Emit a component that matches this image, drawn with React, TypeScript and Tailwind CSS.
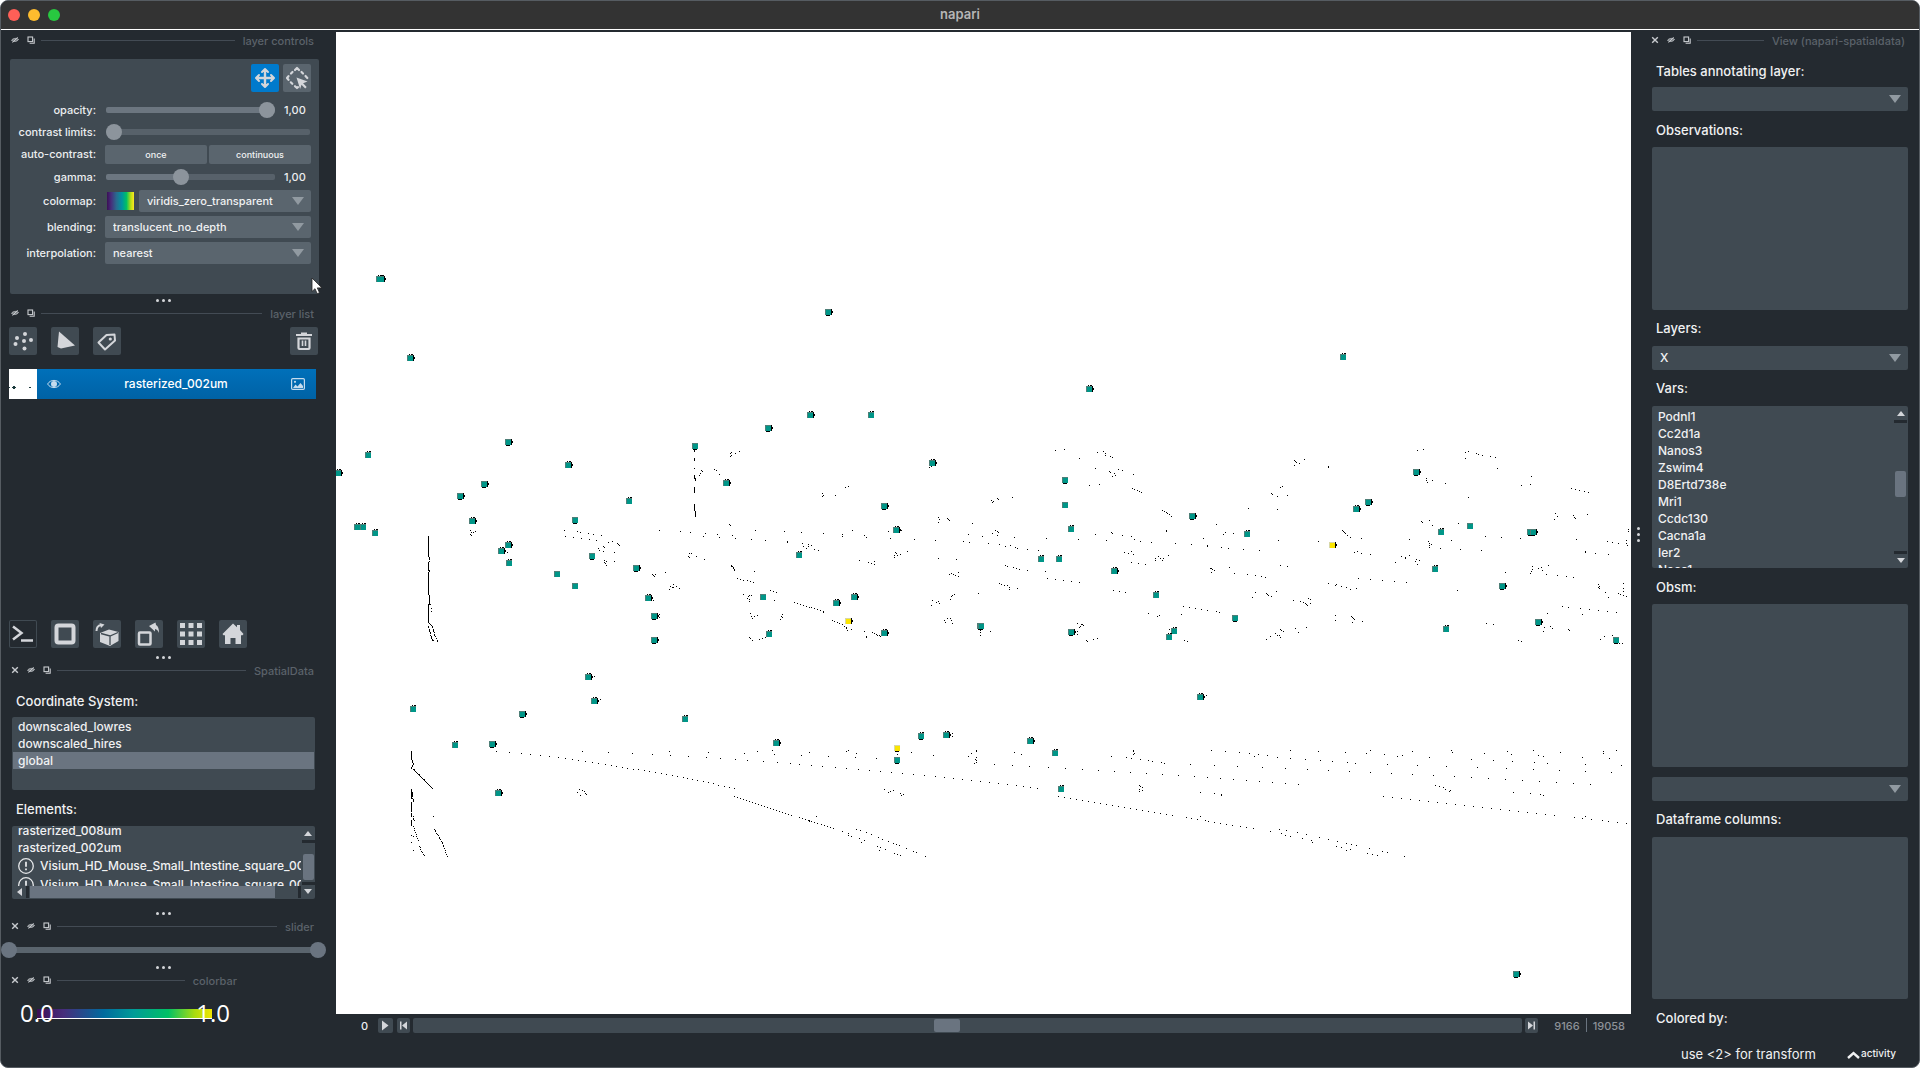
import React from "react";

/* ---------- scatter data ---------- */

// Raster tiles are stored on a finer grid than the canvas: 1568/660 units per pixel across, 3 down.
const UX = 1568 / 660;
const UY = 3;
const CANVAS_X = 336;
const CANVAS_Y = 32;

type Tile = { ox: number; oy: number; marks: string; dots: string; runs: string };

// marks: x,y,flags (r right edge, t top edge, b bottom edge, y yellow); dots: x,y; runs: x1,y1,x2,y2,count
const TILES: Tile[] = [
  {
    ox: 330,
    oy: 260,
    marks:
      "122,56,rt 117,56,t 1184,157,rb 191,294,rt 1141,464,rt 1285,464,t 1041,505,rb 423,547,rb 867,558,b 92,585,t 566,614,rt 1431,608,rt 20,638,rt 941,668,rt 366,673,rb 309,708,rb 710,722,t 1316,739,rb 338,782,rt 582,780,b 64,800,t 78,800,t 107,818,t 1345,811,rt 423,854,rt 408,873,rt 1114,884,t 624,888,b 425,909,t 727,924,rb 539,943, 582,979, 756,1014,rt 1029,1010, 1245,1010,rt 1203,1028,rt 771,1068,rb 1231,1082,ry 1316,1119,rt 1546,1098,b 1043,1122,t 771,1140,rb",
    dots:
      "953,576 951,580 953,585 951,590 963,580 973,574 878,646 881,640 885,634 883,630 913,628 918,631 925,643 1224,682 1232,679 1171,701 1173,705 1171,709 1201,706 1424,622 1428,618 1446,771 1447,779 1446,786 1467,775 1469,779 1471,781 1526,790 334,812 336,817 334,822 337,826 340,818 345,814 949,794 951,797 783,811 833,814 857,817 891,821 887,829 920,823 925,832 956,826 963,835 1001,838 1011,811 1034,841 1080,814 1086,845 1088,848 1120,817 1172,820 1217,823 1217,829 1242,811 1270,826 1274,832 1328,814 1332,835 1388,838 1438,841 1505,844 1519,847 1517,823 1550,829 1564,850 1357,812 1122,850 1125,860 1136,853 1137,860 1132,864 1145,856 1151,867 1160,871 557,811 588,814 594,817 614,820 626,823 645,826 560,829 578,832 597,835 617,838 632,841 661,847 670,844 684,850 686,853 688,856 650,859 652,862 638,865 640,870 650,874 677,877 651,908 653,902 655,910 658,916 656,905 676,904 616,891 421,877 853,880 852,888 855,893 858,881 871,888 889,898 1258,901 1279,908 1287,910 1293,905 1293,913 1343,878 1345,881 1340,886 1342,891 1348,885 1355,884 1372,874 1446,895 1488,898 766,942 768,945 770,950 774,942 797,937 1009,934 1472,942 1476,940 1482,944 1487,946 1492,938 1493,950 806,988 810,978 815,974 814,982 817,982 824,979 831,985 982,1003 994,1010 997,1006 992,1015 996,1018 997,1024 1001,1005 1046,991 1053,994 1061,997 1056,1021 1483,1003 1480,1007 1477,1010 1475,1018 1432,1021 1430,1035 1441,1027 1446,1024 1449,1030 1540,1000 999,1060 1001,1068 1003,1076 1008,1070 1015,1067 1074,1063 1072,1068 1074,1072 1070,1078 1467,1074 1460,1080 1462,1087 1474,1074 1477,1080 1479,1090 996,1132 1000,1136 1003,1142 1020,1139 1028,1135 1034,1131 1271,1114 1274,1132 1274,1130 769,1021 783,1064 783,1073 1226,1101 1228,1106 1229,1110 1238,1108 1546,1110 1546,1118 1546,1125 255,1144 1172,1056",
    runs:
      "234,828,234,874,28 234,877,236,903,9 234,906,234,930,12 236,930,234,944,5 234,945,234,1004,30 236,1006,236,1034,10 239,1034,241,1055,3 234,1032,234,1085,24 235,1088,243,1098,5 243,1100,250,1130,9 234,1100,243,1140,12 250,1130,255,1141,3 240,1132,246,1140,4 866,572,866,574,2 866,595,866,602,5 866,626,866,626,1 866,646,868,662,7 866,683,866,697,7 866,733,866,742,5 866,744,869,768,10 953,916,962,930,7 968,955,1006,968,6 1104,1027,1172,1055,11 1194,1081,1222,1098,6 1290,1118,1308,1130,6 400,879,408,879,4",
  },
  {
    ox: 980,
    oy: 330,
    marks:
      "862,80,t 259,176,rt 1036,426,rb 202,451,b 922,517,rb 202,524,l 893,536,rt 505,558,rb 1166,588, 216,596,t 1095,606,t 1308,606,rb 1314,606,rb 634,612,t 836,645,ry 145,686,t 188,686,t 1081,716,t 318,722,rt 1241,769,rb 420,794,t 606,865,b 1326,876,rb 4,888,b 1109,896,t 462,902,t 218,906,rb 449,920,t 1512,930,b",
    dots:
      "179,361 200,358 236,385 279,367 293,364 297,370 299,376 309,379 315,382 274,415 307,424 310,428 319,430 328,418 338,421 321,436 314,439 364,433 260,466 285,463 77,502 27,512 30,516 33,513 41,505 44,507 747,391 750,394 753,398 758,400 746,405 771,388 828,409 828,412 1039,361 1053,358 1153,367 1160,364 1153,385 1180,370 1184,373 1195,376 1213,379 1225,382 1229,415 1061,444 1061,450 1062,456 1075,451 1106,460 1160,502 1310,439 1308,463 1286,466 692,490 695,493 707,499 715,472 718,469 730,496 638,535 707,538 1367,550 1365,568 1371,559 1409,556 1412,562 1414,565 1443,553 562,583 1049,574 1051,577 1068,571 1075,586 1137,580 38,601 41,604 43,607 30,609 41,616 6,619 82,622 158,625 234,628 274,613 312,607 315,610 300,631 338,616 360,619 367,628 381,634 408,637 443,601 443,604 464,640 503,643 531,625 541,646 541,649 574,652 578,613 583,607 590,655 602,610 626,658 664,661 709,631 804,634 862,601 863,604 866,607 868,611 872,616 880,622 906,625 1020,628 1065,635 1067,640 1069,646 1067,651 1072,642 1094,655 1120,631 1142,658 1191,661 1201,619 1239,622 1284,625 1417,628 1541,599 1541,604 1491,634 1503,637 1516,640 1535,631 1535,640 1538,646 1439,664 1439,667 1462,670 1493,673 20,640 46,643 60,649 73,646 85,652 89,655 113,658 138,661 343,667 352,670 361,664 364,673 360,697 376,700 393,703 417,691 417,685 423,680 430,684 433,690 437,686 449,676 890,667 897,664 906,670 928,673 987,697 1001,679 1010,685 1012,681 1020,676 1034,694 1037,688 1039,703 1044,691 60,706 66,709 79,712 87,715 95,718 113,721 155,724 547,715 551,716 553,719 556,722 550,727 593,712 605,730 635,733 654,736 669,739 678,742 714,706 730,709 160,745 179,748 198,751 217,754 236,757 899,745 928,748 956,751 985,754 1013,757 1248,727 1308,730 1310,724 1313,709 1312,718 1328,715 1333,712 1336,721 1350,706 1346,733 1371,736 1393,739 1410,742 828,760 846,764 845,766 859,769 870,772 880,778 894,775 46,760 52,763 59,765 65,767 69,771 70,777 89,775 317,781 331,784 346,787 647,802 654,787 680,790 683,793 686,795 692,799 704,784 745,811 762,814 768,817 773,819 776,822 779,826 781,805 785,808 784,820 1134,781 1470,763 1471,769 1472,775 1469,772 1529,760 1528,775 1528,784 1486,787 1493,802 1517,790 1521,794 1529,796 1536,799 483,829 497,832 512,835 526,838 541,841 562,844 569,847 479,853 401,850 422,859 426,856 844,856 844,871 883,859 885,862 887,865 889,868 885,877 909,874 1384,829 1398,832 1426,835 1448,838 1469,841 1490,844 1512,847 1431,853 1348,850 1203,880 1220,883 232,880 236,892 240,884 243,882 245,886 238,890 231,905 231,913 25,904 749,895 756,907 775,892 715,898 717,902 720,905 703,911 706,915 711,917 715,922 690,919 680,928 450,898 486,931 492,934 253,931 256,934 269,928 279,925 1279,931 1286,934 1339,904 1341,892 1355,890 1359,895 1398,898 1401,901 1483,919 1474,928 1502,916 1519,940 1526,940",
    runs: "362,475,384,487,5 434,542,455,558,6 1405,475,1445,487,5",
  },
  {
    ox: 330,
    oy: 640,
    marks:
      "613,111,rt 627,182,rt 197,206,t 457,222,rb 843,236,t 297,314,t 385,312,rb 1061,309,rt 1404,288,tb 1464,284,rt 1347,324,yb 1347,360,b 399,458,rt",
    dots:
      "628,108 642,178 1479,281 1479,288 600,334 661,337 718,340 766,343 806,334 809,346 851,349 894,352 899,337 928,355 964,358 985,340 993,361 1015,334 1030,364 1051,331 1056,343 1063,367 1094,370 1115,373 1144,376 1170,379 1201,382 1227,385 1255,388 1282,391 1308,394 1334,397 1360,400 1386,403 1412,406 1438,409 1460,412 1481,415 1502,418 1524,421 1545,424 1566,427 1120,346 1139,337 1184,349 1226,334 1231,331 1252,340 1248,352 1298,355 1348,343 1381,337 1434,346 1518,349 1523,340 1536,331 1535,334 1535,352 1533,358 1537,362 1535,367 1531,371 587,457 592,448 594,466 600,451 604,455 607,460 610,463 245,529 193,607 198,631 194,586 198,590 1155,529 1138,542 1138,545 1231,580 1233,586 1238,589 1257,595 1269,601 1262,607 1300,619 1307,622 1305,631 1320,628 1341,640 1348,643 1356,646 1250,568 1260,571 1274,577 1286,583 1303,592 1312,598 1327,604 1338,610 1346,613 1353,616 1370,625 1386,634 1393,637 1414,649 1317,448 1327,457 1331,454 1338,451 1355,460 1357,465 1362,463",
    runs:
      "194,333,194,357,14 194,357,198,372,7 198,372,194,386,6 198,387,243,445,24 194,448,198,484,12 194,456,194,474,9 194,486,194,512,12 194,512,194,530,6 198,530,200,542,4 194,542,194,557,8 198,560,210,600,8 212,619,224,647,7 248,568,270,615,13 270,618,279,649,6 395,334,426,337,2 455,340,521,349,4 543,352,655,373,8 668,376,839,412,14 849,415,961,445,10 961,469,1096,526,20 1115,532,1196,566,12 1217,574,1231,580,2",
  },
  {
    ox: 980,
    oy: 640,
    marks: "523,171,rt 119,302,rt 178,338,t 192,446,t",
    dots:
      "537,166 82,337 98,343 312,349 348,352 364,331 364,335 366,339 364,344 361,356 381,358 400,361 411,364 431,367 438,370 500,373 557,376 612,379 671,382 726,385 778,388 828,391 878,394 928,397 977,400 1027,403 1077,406 1127,409 1167,412 1208,415 1248,418 1289,421 1329,424 1369,427 1410,430 1450,433 34,373 77,376 117,379 163,382 203,385 243,388 281,391 319,394 357,397 395,400 433,403 471,406 509,409 540,412 571,415 602,418 633,421 664,424 695,427 726,430 756,433 550,331 583,334 616,337 640,340 652,349 661,343 683,346 707,352 737,331 737,355 773,358 804,334 809,361 837,364 868,337 873,367 892,370 918,340 928,331 961,343 968,373 993,349 1004,346 1027,334 1039,376 1068,352 1108,379 1120,331 1122,337 1167,358 1182,382 1198,340 1220,361 1253,334 1263,343 1265,364 1250,385 1315,331 1327,346 1339,349 1317,367 1348,370 1315,388 1379,337 1376,391 1431,352 1438,373 1438,394 1481,334 1481,340 1495,355 1512,331 1524,376 1500,397 0,424 22,427 43,430 65,433 87,436 103,439 120,442 136,445 380,436 382,440 385,443 379,448 386,451 379,454 524,457 557,460 574,463 574,466 1082,436 1091,439 1101,442 1106,447 1117,451 1115,454 1267,457 1308,460 1331,463 1339,466 524,529 536,541 490,532 502,535 517,538 543,544 557,547 571,550 585,553 600,556 619,559 633,562 650,565 690,574 711,568 728,571 716,580 726,586 737,589 754,577 775,583 766,595 787,601 790,607 806,592 828,598 849,604 871,610 882,613 894,616 847,619 859,622 871,631 880,628 925,625 920,640 932,643 944,646 956,634 968,637 1008,649 1412,532 1431,535 1438,529 1453,538 1479,541 1493,544 1514,547 1536,550",
    runs: "186,469,458,526,20 958,469,1365,526,20",
  },
];

// The lone marker near the lower right corner of the canvas.
const LONE_MARK = { x: 1513, y: 971 };

type Mark = { x: number; y: number; flags: string };

function buildScene() {
  const marks: Mark[] = [{ ...LONE_MARK, flags: "rb" }];
  let d = "";
  const px = (t: Tile, x: number, y: number) => {
    const X = Math.round(t.ox + x / UX - 0.5) - CANVAS_X;
    const Y = Math.round(t.oy + y / UY - 0.5) - CANVAS_Y;
    d += `M${X} ${Y}h1v1h-1z`;
  };
  for (const t of TILES) {
    for (const item of t.marks.split(" ")) {
      const [x, y, flags] = item.split(",");
      marks.push({ x: Math.floor(t.ox + Number(x) / UX - 2.8), y: Math.round(t.oy + Number(y) / UY - 3), flags });
    }
    for (const item of t.dots.split(" ")) {
      const [x, y] = item.split(",").map(Number);
      px(t, x, y);
    }
    for (const item of t.runs.split(" ")) {
      const [x1, y1, x2, y2, n] = item.split(",").map(Number);
      for (let i = 0; i < n; i++) {
        const k = n > 1 ? i / (n - 1) : 0;
        px(t, x1 + (x2 - x1) * k, y1 + (y2 - y1) * k);
      }
    }
  }
  return { marks, d };
}

const SCENE = buildScene();

function Canvas() {
  return (
    <svg
      className="block h-full w-full bg-white"
      viewBox="0 0 1295 982"
      preserveAspectRatio="xMinYMin slice"
      shapeRendering="crispEdges"
      role="img"
      aria-label="rasterized_002um"
    >
      <path d={SCENE.d} fill="#000" />
      {SCENE.marks.map((m, i) => {
        const x = m.x - CANVAS_X;
        const y = m.y - CANVAS_Y;
        const f = m.flags;
        return (
          <g key={i}>
            {f.includes("r") && <rect x={x + 6} y={y} width="1" height="6" fill="#000" />}
            {f.includes("r") && <rect x={x + 7} y={y + 2} width="1" height="2" fill="#000" />}
            {f.includes("t") && <path d={`M${x + 2} ${y - 1}h1v1h-1zM${x + 4} ${y - 1}h2v1h-2z`} fill="#000" />}
            {f.includes("b") && <rect x={x + 1} y={y + 6} width="4" height="1" fill="#000" />}
            <rect x={x} y={y} width="6" height="6" fill={f.includes("y") ? "#d8d8a8" : "#4f7f78"} />
            <rect x={x + 1} y={y + 1} width="5" height="5" fill={f.includes("y") ? "#fbe500" : "#009688"} />
          </g>
        );
      })}
    </svg>
  );
}

/* ---------- small parts ---------- */

function Splitter() {
  return (
    <div className="flex h-[6px] w-full items-center justify-center gap-[3px]">
      <span className="size-[3px] rounded-full bg-[#d4d6d9]" />
      <span className="size-[3px] rounded-full bg-[#d4d6d9]" />
      <span className="size-[3px] rounded-full bg-[#d4d6d9]" />
    </div>
  );
}

function DockHeader({ title, closable = false }: { title: string; closable?: boolean }) {
  return (
    <div className="flex h-5 items-center">
      <div className="flex gap-2 text-[#c9ccd0]">
        {closable && (
          <button aria-label={`Close ${title}`} className="size-2">
            <svg viewBox="0 0 8 8" className="size-2" fill="none" stroke="currentColor" strokeWidth="1.4">
              <path d="M1.2 1.2l5.600 5.600M6.800 1.200l-5.600 5.600" />
            </svg>
          </button>
        )}
        <button aria-label={`Hide ${title}`} className="size-2">
          <svg viewBox="0 0 8 8" className="size-2" fill="none" stroke="currentColor">
            <path d="M.5 4.4C1.6 2.2 5.8 1.6 7.5 3.4 6.4 5.8 2.2 6.2.5 4.4z" fill="currentColor" fillOpacity=".55" strokeWidth=".7" />
            <path d="M1.6 6.6L6.6 1.2" strokeWidth="1" />
          </svg>
        </button>
        <button aria-label={`Float ${title}`} className="size-2">
          <svg viewBox="0 0 8 8" className="size-2" fill="none" stroke="currentColor" strokeWidth="1.1">
            <rect x="1" y="1" width="4.6" height="4.6" />
            <path d="M7.2 2.6v4.6H2.6" />
          </svg>
        </button>
      </div>
      <div className="ml-[6px] h-px flex-1 bg-[#434b54]" />
      <h2 className="ml-2 pt-[2px] text-[11px] leading-[18px] font-medium text-[#5b626a]">{title}</h2>
    </div>
  );
}

function Arrow() {
  return (
    <svg viewBox="0 0 12 8" className="pointer-events-none absolute top-1/2 right-[7px] h-2 w-3 -translate-y-1/2">
      <path d="M0 0h12L6 8z" fill="#919aa1" />
    </svg>
  );
}

function Combo({ id, value, label, tone }: { id: string; value: string; label?: string; tone: "panel" | "dock" }) {
  return (
    <div className="relative min-w-0 flex-1">
      <select
        id={id}
        aria-label={label}
        defaultValue={value}
        className={
          tone === "panel"
            ? "block h-[22px] w-full appearance-none rounded-[2px] bg-[#5a656e] px-2 text-[11px] leading-[22px] font-medium text-[#f0f1f2]"
            : "block h-6 w-full appearance-none rounded-[2px] bg-[#404a52] px-2 text-[12px] leading-6 font-medium text-[#f0f1f2]"
        }
      >
        <option value={value}>{value}</option>
      </select>
      <Arrow />
    </div>
  );
}

const RANGE =
  "block h-4 min-w-0 flex-1 appearance-none bg-transparent [&::-webkit-slider-runnable-track]:h-[6px] [&::-webkit-slider-runnable-track]:rounded-[2px] [&::-webkit-slider-thumb]:mt-[-5px] [&::-webkit-slider-thumb]:size-4 [&::-webkit-slider-thumb]:appearance-none [&::-webkit-slider-thumb]:rounded-full [&::-webkit-slider-thumb]:bg-[#8c949c]";

function Field({ label, id, children, h }: { label: string; id: string; children: React.ReactNode; h: string }) {
  return (
    <div className={`flex items-center ${h}`}>
      <label htmlFor={id} className="w-[86px] shrink-0 text-right text-[11px] font-medium whitespace-nowrap text-[#eceef0]">
        {label}
      </label>
      <div className="ml-[9px] flex min-w-0 flex-1 items-center">{children}</div>
    </div>
  );
}

function IconButton({ label, className = "bg-[#404a52]", children }: { label: string; className?: string; children: React.ReactNode }) {
  return (
    <button aria-label={label} className={`size-7 shrink-0 rounded-[2px] text-[#d4d6da] ${className}`}>
      <svg viewBox="0 0 28 28" className="size-full" fill="none" stroke="currentColor">
        {children}
      </svg>
    </button>
  );
}

function ScrollUp() {
  return (
    <svg viewBox="0 0 8 5" className="h-[5px] w-2">
      <path d="M0 5L4 0l4 5z" fill="#d4d6da" />
    </svg>
  );
}

function ScrollDown() {
  return (
    <svg viewBox="0 0 8 5" className="h-[5px] w-2">
      <path d="M0 0l4 5 4-5z" fill="#d4d6da" />
    </svg>
  );
}

/* ---------- left docks ---------- */

function LayerControls() {
  return (
    <section className="mt-[9px] mr-[17px] ml-[9px] h-[235px] rounded-[2px] bg-[#404a52] pr-2">
      <div className="flex justify-end gap-1 pt-[5px]">
        <IconButton label="Pan/zoom" className="bg-[#007acc]">
          <path d="M14 6v16M6 14h16" strokeWidth="2.4" />
          <path d="M11 8L14 5l3 3M11 20L14 23l3-3M8 11L5 14l3 3M20 11L23 14l-3 3" fill="currentColor" strokeWidth="2" strokeLinecap="round" strokeLinejoin="round" />
        </IconButton>
        <IconButton label="Transform" className="bg-[#5a656e]">
          <path
            d="M12 6l2-2 2 2M18.500 8l1.500 1.500M22.500 12l1.800 2M9.500 8L8 9.500M5.500 12.200L4 14l1.500 1.800M7.800 18.300l1.500 1.500M12 22.200l2 1.800 1-.8"
            strokeWidth="2.200"
            strokeLinecap="round"
            strokeLinejoin="round"
          />
          <path d="M13.500 13.500l11 4-4.400 1.800 3.600 3.700-1.500 1.500-3.700-3.700-1.400 4.200z" fill="currentColor" stroke="none" />
        </IconButton>
      </div>
      <div className="pt-2">
        <Field label="opacity:" id="opacity" h="h-5">
          <input
            id="opacity"
            type="range"
            min="0"
            max="1"
            step="0.01"
            defaultValue="1"
            className={`${RANGE} ml-px [&::-webkit-slider-runnable-track]:bg-[#6c7680]`}
          />
          <output className="w-9 pt-px pl-[9px] text-[11px] font-medium text-[#eceef0]">1,00</output>
        </Field>
        <Field label="contrast limits:" id="contrast" h="h-6">
          <input
            id="contrast"
            type="range"
            min="0"
            max="1"
            step="0.01"
            defaultValue="0"
            className={`${RANGE} mx-px [&::-webkit-slider-runnable-track]:bg-[#57616a]`}
          />
        </Field>
        <Field label="auto-contrast:" id="once" h="h-[21px]">
          <div className="grid flex-1 grid-cols-2 gap-[2px] text-[9px] font-medium text-[#f0f1f2]">
            <button id="once" className="h-[19px] rounded-[2px] bg-[#5a656e] leading-[19px]">
              once
            </button>
            <button className="h-[19px] rounded-[2px] bg-[#5a656e] leading-[19px]">continuous</button>
          </div>
        </Field>
        <Field label="gamma:" id="gamma" h="h-6">
          <input
            id="gamma"
            type="range"
            min="0"
            max="1"
            step="0.01"
            defaultValue="0.44"
            className={`${RANGE} ml-px [&::-webkit-slider-runnable-track]:bg-[linear-gradient(90deg,#6c7680_45%,#57616a_45%)]`}
          />
          <output className="w-9 pt-px pl-[9px] text-[11px] font-medium text-[#eceef0]">1,00</output>
        </Field>
        <div className="flex flex-col gap-1 pt-px">
          <Field label="colormap:" id="colormap" h="h-[22px]">
            <span className="mr-[5px] ml-[2px] h-[18px] w-[27px] bg-[linear-gradient(90deg,#3b0f56,#472d7b_15%,#2a6a8e_35%,#0093a0_55%,#00c065_72%,#b8de10_88%,#fde725)]" />
            <Combo id="colormap" value="viridis_zero_transparent" tone="panel" />
          </Field>
          <Field label="blending:" id="blending" h="h-[22px]">
            <Combo id="blending" value="translucent_no_depth" tone="panel" />
          </Field>
          <Field label="interpolation:" id="interpolation" h="h-[22px]">
            <Combo id="interpolation" value="nearest" tone="panel" />
          </Field>
        </div>
      </div>
    </section>
  );
}

function LayerList() {
  return (
    <section className="flex flex-1 flex-col pr-[18px] pl-2">
      <div className="mt-1 flex gap-[14px]">
        <IconButton label="New points layer">
          <g fill="currentColor" stroke="none">
            <circle cx="16" cy="7" r="2" />
            <circle cx="8" cy="11" r="2" />
            <circle cx="15" cy="14" r="2" />
            <circle cx="22" cy="13" r="2" />
            <circle cx="6.500" cy="17" r="2" />
            <circle cx="15.500" cy="21.500" r="2" />
          </g>
        </IconButton>
        <IconButton label="New shapes layer">
          <path d="M8 4.500L24 18.500 10 21.500 6.500 20z" fill="currentColor" stroke="none" />
        </IconButton>
        <IconButton label="New labels layer">
          <path d="M13.500 8L21.500 7.500 22 13.500 12 22.500 5.500 15.500z" strokeWidth="2" strokeLinejoin="round" />
          <circle cx="17.300" cy="12" r="1.600" fill="currentColor" stroke="none" />
        </IconButton>
        <span className="flex-1" />
        <IconButton label="Delete layer">
          <path d="M6 8h16M11 6.500h6" strokeWidth="2.200" />
          <path d="M8.500 11.500h11V21q0 1-1 1h-9q-1 0-1-1z" strokeWidth="2.200" />
          <path d="M12.500 13.500v5.500M15.500 13.500v5.500" strokeWidth="1.600" />
        </IconButton>
      </div>
      <div className="mt-[14px] mr-[2px] flex h-[30px] items-center bg-linear-to-b from-[#0070ba] to-[#0062a5]">
        <svg viewBox="0 0 28 30" className="h-[30px] w-7 bg-white">
          <path d="M0 18h1v1H0zM3 18h4v1H3zM4 17h2v3H4zM20 18h2v1h-2z" fill="#1b3a3c" />
        </svg>
        <button aria-label="Toggle visibility" className="ml-[10px] text-[#c5dcee]">
          <svg viewBox="0 0 14 10" className="h-[10px] w-[14px]" fill="none" stroke="currentColor">
            <path d="M.6 5C3.400.2 10.600.2 13.400 5 10.600 9.800 3.400 9.800.6 5z" />
            <circle cx="7" cy="5" r="3" fill="currentColor" stroke="none" />
          </svg>
        </button>
        <span className="flex-1 text-center text-[12px] leading-[30px] font-medium text-white">rasterized_002um</span>
        <svg viewBox="0 0 14 12" className="mr-[11px] h-3 w-[14px] text-[#c5dcee]" fill="none" stroke="currentColor">
          <rect x=".6" y=".6" width="12.800" height="10.800" rx="1.200" strokeWidth="1.200" />
          <path d="M2 10l2.500-3.500 2 2L9.500 5 12 8v2z" fill="currentColor" stroke="none" />
          <circle cx="4" cy="3.800" r="1.100" fill="currentColor" stroke="none" />
        </svg>
      </div>
    </section>
  );
}

function ViewerButtons() {
  return (
    <div className="mb-[6px] flex gap-[14px] pl-2">
      <IconButton label="Open console" className="bg-[#242a30] ring-1 ring-[#404a52] ring-inset">
        <path d="M4 6.500l8.500 6.500L4 19.500M12 20.500h12" strokeWidth="2.500" />
      </IconButton>
      <IconButton label="Toggle 2D/3D">
        <rect x="5.500" y="5.500" width="17" height="17" rx="2" strokeWidth="4" />
      </IconButton>
      <IconButton label="Roll dimensions">
        <path d="M7 13l9-3.500L25.500 12v9L17 26l-10-4z" fill="currentColor" stroke="none" />
        <path d="M8 13.500l9 2.500 8-3.500M17 16v9" stroke="#404a52" strokeWidth="1.300" />
        <path d="M3.500 11c0-4 1.500-5.500 4.500-6" strokeWidth="2" />
        <path d="M6.500 3l5 1.500-3.500 3.500z" fill="currentColor" stroke="none" />
      </IconButton>
      <IconButton label="Transpose dimensions">
        <rect x="4" y="12.500" width="11.500" height="12" rx="1" strokeWidth="2.500" />
        <path d="M14 6l6.500-3.500.5 2.500c2 1 3 3.500 3 8-1-2.500-2-3.500-4-4v2.500z" fill="currentColor" stroke="none" />
      </IconButton>
      <IconButton label="Toggle grid">
        <path d="M3 3h5v5H3zM11.500 3h5v5h-5zM20 3h5v5h-5zM3 11.500h5v5H3zM11.500 11.500h5v5h-5zM20 11.500h5v5h-5zM3 20h5v5H3zM11.500 20h5v5h-5zM20 20h5v5h-5z" fill="currentColor" stroke="none" />
      </IconButton>
      <IconButton label="Reset view">
        <path d="M14 3.500l4 3.700V5h3v5l3.500 4-1 1.200H22V24h-5.500v-6h-5v6H6v-8.800H4.500l-1-1.200z" fill="currentColor" stroke="none" />
      </IconButton>
    </div>
  );
}

const WARN = (
  <svg viewBox="0 0 16 16" className="size-4 shrink-0" fill="none" stroke="#e4e6e8" strokeWidth="1.300">
    <circle cx="8" cy="8" r="7.300" />
    <path d="M8 3.800v5M8 10.500v1.700" strokeWidth="1.800" />
  </svg>
);

function SpatialData() {
  return (
    <section className="pr-[21px] pl-[11px] text-[12px] font-medium text-[#f0f1f2]">
      <h3 className="mt-[5px] h-8 pl-1 text-[13px] leading-8">Coordinate System:</h3>
      <ul role="listbox" aria-label="Coordinate System" className="h-[73px] rounded-[2px] bg-[#404a52] px-px pt-px leading-[17px]">
        <li role="option" aria-selected="false" className="px-[5px]">downscaled_lowres</li>
        <li role="option" aria-selected="false" className="px-[5px]">downscaled_hires</li>
        <li role="option" aria-selected="true" className="bg-[#6a7480] px-[5px]">global</li>
      </ul>
      <h3 className="h-9 pt-px pl-1 text-[13px] leading-9">Elements:</h3>
      <div className="flex h-[73px] overflow-hidden rounded-[2px] bg-[#404a52]">
        <div className="flex min-w-0 flex-1 flex-col">
          <div className="flex h-[60px] flex-col justify-end overflow-hidden">
            <ul role="listbox" aria-label="Elements" className="-mb-2 leading-[17px] whitespace-nowrap">
              <li role="option" aria-selected="false" className="px-[6px]">rasterized_008um</li>
              <li role="option" aria-selected="false" className="px-[6px]">rasterized_002um</li>
              <li role="option" aria-selected="false" className="flex h-[19px] items-center gap-[6px] px-[6px]">
                {WARN}Visium_HD_Mouse_Small_Intestine_square_008um
              </li>
              <li role="option" aria-selected="false" className="flex h-[19px] items-center gap-[6px] px-[6px]">
                {WARN}Visium_HD_Mouse_Small_Intestine_square_002um
              </li>
            </ul>
          </div>
          <div className="flex h-3 items-center">
            <svg viewBox="0 0 5 8" className="ml-[5px] h-2 w-[5px]">
              <path d="M5 0v8L0 4z" fill="#d4d6da" />
            </svg>
            <span className="ml-1 h-3 w-[3px] bg-[#242a30]" />
            <span className="ml-px h-3 w-[245px] bg-[#6a7480]" />
            <span className="flex-1" />
            <span className="h-3 w-[3px] bg-[#242a30]" />
          </div>
        </div>
        <div className="flex w-[14px] flex-col items-center pt-[5px]">
          <ScrollUp />
          <span className="mt-1 h-[3px] w-[13px] bg-[#242a30]" />
          <span className="mt-[11px] h-[26px] w-[11px] rounded-[2px] bg-[#6a7480]" />
          <span className="mt-[2px] h-[3px] w-[13px] bg-[#242a30]" />
          <span className="mt-1 flex">
            <ScrollDown />
          </span>
        </div>
      </div>
    </section>
  );
}

function RangeSlider() {
  const shared =
    "absolute top-1/2 h-4 -translate-y-1/2 appearance-none bg-transparent [&::-webkit-slider-thumb]:size-4 [&::-webkit-slider-thumb]:appearance-none [&::-webkit-slider-thumb]:rounded-full [&::-webkit-slider-thumb]:bg-[#6a7480]";
  return (
    <div className="relative mr-[10px] h-7">
      <div className="absolute inset-x-2 top-[11px] h-[6px] bg-[#5a646d]" />
      <input type="range" aria-label="Slider minimum" defaultValue="0" className={`${shared} left-0 w-1/2`} />
      <input type="range" aria-label="Slider maximum" defaultValue="100" className={`${shared} right-0 w-1/2`} />
    </div>
  );
}

function Colorbar() {
  return (
    <div className="h-[77px] pt-2 pl-[19px] text-white">
      <div className="relative h-[30px] w-[210px]">
        <div className="absolute top-[11px] left-[17px] h-[10px] w-[175px] border-b border-white bg-[linear-gradient(90deg,#3b0f56,#472d7b_15%,#006a9e_38%,#009b98_55%,#00c065_75%,#a8dc10_90%,#f0e500)]" />
        <div className="relative flex justify-between font-['Open_Sans',sans-serif] text-[24px] leading-[30px]">
          <span>0.0</span>
          <span>1.0</span>
        </div>
      </div>
    </div>
  );
}

/* ---------- right dock ---------- */

const GENES = ["Podnl1", "Cc2d1a", "Nanos3", "Zswim4", "D8Ertd738e", "Mri1", "Ccdc130", "Cacna1a", "Ier2", "Nacc1"];

const BOX = "min-h-0 flex-1 basis-0 rounded-[2px] bg-[#404a52]";

function ViewDock() {
  return (
    <aside className="flex w-[274px] shrink-0 flex-col pr-[11px] pl-[7px] text-[13px] font-medium text-[#f0f1f2]">
      <div className="-ml-px pr-[3px]">
        <DockHeader title="View (napari-spatialdata)" closable />
      </div>
      <label htmlFor="tables" className="mt-[5px] h-8 pl-1 leading-8">
        Tables annotating layer:
      </label>
      <div className="flex">
        <Combo id="tables" value="" tone="dock" />
      </div>
      <h3 className="h-9 pt-px pl-1 leading-9">Observations:</h3>
      <ul role="listbox" aria-label="Observations" className={BOX} />
      <label htmlFor="layers" className="h-9 pl-1 leading-9">
        Layers:
      </label>
      <div className="flex">
        <Combo id="layers" value="X" tone="dock" />
      </div>
      <h3 className="h-9 pl-1 leading-9">Vars:</h3>
      <div className={`${BOX} flex overflow-hidden`}>
        <ul role="listbox" aria-label="Vars" className="flex-1 pt-[2px] pl-[6px] text-[12px] leading-[17px]">
          {GENES.map((g) => (
            <li key={g} role="option" aria-selected="false">
              {g}
            </li>
          ))}
        </ul>
        <div className="flex w-[15px] flex-col items-center pt-[5px] pb-[5px]">
          <ScrollUp />
          <span className="mt-1 h-[3px] w-[13px] bg-[#242a30]" />
          <span className="mt-[48px] h-[26px] w-[11px] rounded-[2px] bg-[#6a7480]" />
          <span className="flex-1" />
          <span className="mb-1 h-[3px] w-[13px] bg-[#242a30]" />
          <ScrollDown />
        </div>
      </div>
      <h3 className="h-9 pt-px pl-1 leading-9">Obsm:</h3>
      <ul role="listbox" aria-label="Obsm" className={BOX} />
      <div className="mt-[10px] flex">
        <Combo id="obsm-key" value="" label="Obsm key" tone="dock" />
      </div>
      <h3 className="h-9 pl-1 leading-9">Dataframe columns:</h3>
      <ul role="listbox" aria-label="Dataframe columns" className={BOX} />
      <h3 className="mb-2 h-9 pl-1 leading-[38px]">Colored by:</h3>
    </aside>
  );
}

/* ---------- canvas footer ---------- */

function DimsRow() {
  return (
    <div className="flex h-[29px] items-start pt-1 pr-[6px] pl-[25px] text-[11px] leading-4 font-medium text-[#eceef0]">
      <label htmlFor="dim0" className="w-[17px]">
        0
      </label>
      <button aria-label="Play" className="h-[15px] w-[15px] rounded-[2px] bg-[#404a52]">
        <svg viewBox="0 0 15 15" className="size-[15px]">
          <path d="M4 2.500v10l6.500-5z" fill="#d4d6da" />
        </svg>
      </button>
      <button aria-label="Previous frame" className="ml-1 h-[15px] w-[13px] rounded-[2px] bg-[#404a52]">
        <svg viewBox="0 0 13 15" className="h-[15px] w-[13px]">
          <path d="M3 3.500h1.500v8H3zM10 3.500v8l-5-4z" fill="#d4d6da" />
        </svg>
      </button>
      <input
        id="dim0"
        type="range"
        min="0"
        max="19058"
        defaultValue="9166"
        className="ml-[3px] block h-[15px] min-w-0 flex-1 appearance-none rounded-[2px] bg-[#404a52] [&::-webkit-slider-thumb]:h-[13px] [&::-webkit-slider-thumb]:w-[26px] [&::-webkit-slider-thumb]:appearance-none [&::-webkit-slider-thumb]:rounded-[2px] [&::-webkit-slider-thumb]:bg-[#6a7480]"
      />
      <button aria-label="Next frame" className="ml-[3px] h-[15px] w-[13px] rounded-[2px] bg-[#404a52]">
        <svg viewBox="0 0 13 15" className="h-[15px] w-[13px]">
          <path d="M8.500 3.500H10v8H8.500zM3 3.500v8l5-4z" fill="#d4d6da" />
        </svg>
      </button>
      <span className="ml-4 text-[#8d9298]">9166</span>
      <span className="mx-[6px] h-[14px] w-px bg-[#6a7480]" />
      <span className="text-[#8d9298]">19058</span>
    </div>
  );
}

function StatusBar() {
  return (
    <footer className="flex h-6 items-center justify-end pr-[23px] text-[13px] text-[#f0f1f2]">
      <span>use &lt;2&gt; for transform</span>
      <button className="mb-1 ml-[31px] flex items-center gap-px text-[10px] leading-4 font-medium">
        <svg viewBox="0 0 13 8" className="mt-1 h-2 w-[13px]" fill="none" stroke="currentColor" strokeWidth="2.400">
          <path d="M1 7l5.500-5L12 7" />
        </svg>
        activity
      </button>
    </footer>
  );
}

export default function App() {
  return (
    <div className="h-screen min-h-[900px] bg-white font-[Inter,'Liberation_Sans',sans-serif] antialiased">
      <div className="relative flex h-full flex-col overflow-hidden rounded-[8px] border border-[#565c62] bg-[#242a30]">
        <header className="relative flex h-[28px] shrink-0 items-center bg-[#333333]">
          <div className="ml-[7px] flex gap-2">
            <button aria-label="Close window" className="size-3 rounded-full bg-[#ff5f57]" />
            <button aria-label="Minimise window" className="size-3 rounded-full bg-[#febc2e]" />
            <button aria-label="Zoom window" className="size-3 rounded-full bg-[#28c840]" />
          </div>
          <h1 className="pointer-events-none absolute inset-x-0 text-center text-[13px] font-semibold text-[#b6b6b6]">napari</h1>
        </header>
        <div className="h-px shrink-0 bg-white" />
        <div className="flex min-h-0 flex-1">
          <div className="flex w-[335px] shrink-0 flex-col">
            <div className="pr-[22px] pl-[10px]">
              <DockHeader title="layer controls" />
            </div>
            <LayerControls />
            <div className="mt-[3px] pr-[11px]">
              <Splitter />
            </div>
            <div className="pr-[22px] pl-[10px]">
              <DockHeader title="layer list" />
            </div>
            <LayerList />
            <ViewerButtons />
            <div className="pr-[11px]">
              <Splitter />
            </div>
            <div className="pr-[22px] pl-[10px]">
              <DockHeader title="SpatialData" closable />
            </div>
            <SpatialData />
            <div className="mt-[11px] pr-[11px]">
              <Splitter />
            </div>
            <div className="pr-[22px] pl-[10px]">
              <DockHeader title="slider" closable />
            </div>
            <RangeSlider />
            <div className="pr-[11px]">
              <Splitter />
            </div>
            <div className="pr-[99px] pl-[10px]">
              <DockHeader title="colorbar" closable />
            </div>
            <Colorbar />
          </div>
          <div className="flex min-w-0 flex-1 flex-col">
            <div className="flex min-h-0 flex-1">
              <main className="flex min-w-0 flex-1 flex-col pt-[2px]">
                <div className="min-h-0 flex-1">
                  <Canvas />
                </div>
                <DimsRow />
              </main>
              <div className="flex w-[14px] shrink-0 flex-col items-center justify-center gap-[3px] pb-[5px]">
                <span className="size-[3px] rounded-full bg-[#d4d6d9]" />
                <span className="size-[3px] rounded-full bg-[#d4d6d9]" />
                <span className="size-[3px] rounded-full bg-[#d4d6d9]" />
              </div>
              <ViewDock />
            </div>
            <StatusBar />
          </div>
        </div>
        <svg viewBox="0 0 12 18" className="pointer-events-none absolute top-[276px] left-[310px] h-[18px] w-3">
          <path d="M1 1v13.500l3-2.800 2.200 5 2.300-1-2.200-4.800H11z" fill="#fff" stroke="#222" strokeWidth=".8" />
        </svg>
      </div>
    </div>
  );
}
